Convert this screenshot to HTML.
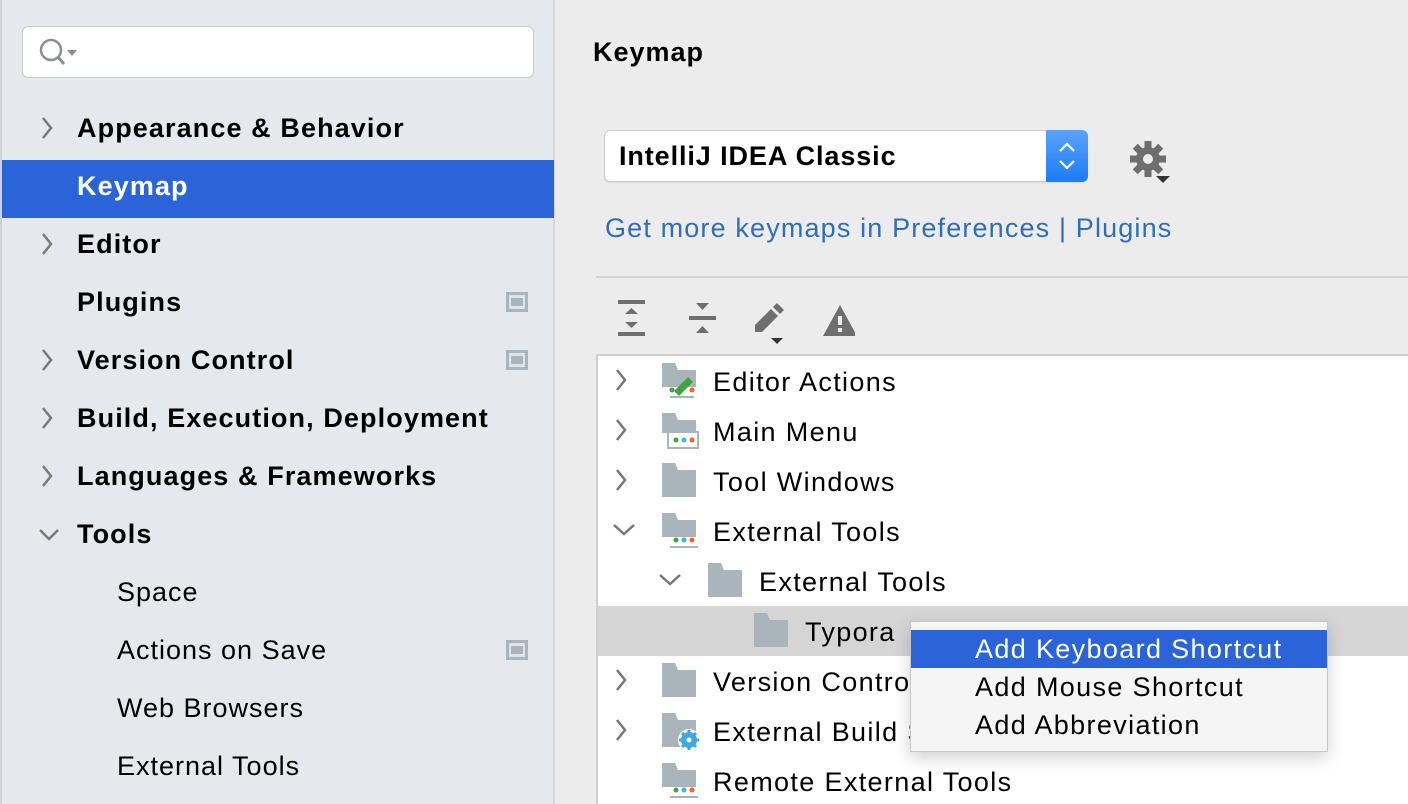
<!DOCTYPE html>
<html><head><meta charset="utf-8"><style>
*{margin:0;padding:0;box-sizing:border-box}
body{width:1408px;height:804px;overflow:hidden;background:#ececec;font-family:"Liberation Sans",Arial,sans-serif;position:relative;color:#000}
.a{position:absolute}
.side{left:0;top:0;width:555px;height:804px;background:#e5e9ee;border-right:2px solid #d3d5d8}
.st{position:absolute;font-size:27px;line-height:30px;white-space:nowrap;letter-spacing:1px}
.b{font-weight:bold;letter-spacing:1.1px}
.tt{position:absolute;font-size:27px;line-height:30px;white-space:nowrap;letter-spacing:1.35px}
</style></head><body>
<div class="a side"></div>
<div class="a" style="left:0;top:0;width:2px;height:804px;background:#cfd2d6"></div>
<div class="a" style="left:22px;top:26px;width:512px;height:52px;background:#fff;border:1px solid #c6c9cd;border-radius:6px"></div>
<svg class="a" style="left:34px;top:36px" width="48" height="34"><circle cx="17" cy="14" r="10" fill="none" stroke="#8a9096" stroke-width="2.5"/><line x1="24" y1="21" x2="30" y2="28" stroke="#8a9096" stroke-width="3"/><path d="M33 14h10l-5 6z" fill="#8a9096"/></svg>

<div class="a" style="left:2px;top:160px;width:552px;height:58px;background:#2b63d9"></div>

<svg class="a" style="left:38px;top:0" width="24" height="804" fill="none" stroke="#7a7a7a" stroke-width="2.5">
<path d="M5 118l8 10-8 10M5 234l8 10-8 10M5 350l8 10-8 10M5 408l8 10-8 10M5 466l8 10-8 10M2 530l9 9 9-9"/></svg>

<div class="st b" style="left:77px;top:113px">Appearance &amp; Behavior</div>
<div class="st b" style="left:77px;top:171px;color:#fff">Keymap</div>
<div class="st b" style="left:77px;top:229px">Editor</div>
<div class="st b" style="left:77px;top:287px">Plugins</div>
<div class="st b" style="left:77px;top:345px">Version Control</div>
<div class="st b" style="left:77px;top:403px">Build, Execution, Deployment</div>
<div class="st b" style="left:77px;top:461px">Languages &amp; Frameworks</div>
<div class="st b" style="left:77px;top:519px">Tools</div>
<div class="st" style="left:117px;top:577px">Space</div>
<div class="st" style="left:117px;top:635px">Actions on Save</div>
<div class="st" style="left:117px;top:693px">Web Browsers</div>
<div class="st" style="left:117px;top:751px">External Tools</div>
<svg class="a" style="left:506px;top:292px" width="22" height="370">
<g id="mi"><rect x="0" y="0" width="22" height="20" fill="#a9b4bd"/><rect x="3" y="3" width="16" height="14" fill="#dfe4e8"/><rect x="5" y="6" width="12" height="8" fill="#a9b4bd"/></g>
<use href="#mi" y="58"/><use href="#mi" y="348"/></svg>

<div class="st b" style="left:593px;top:37px;font-size:27px;letter-spacing:1px">Keymap</div>

<div class="a" style="left:604px;top:130px;width:484px;height:52px;background:#fff;border:1px solid #cbcbcb;border-radius:6px;box-shadow:0 1px 1px rgba(0,0,0,.08)"></div>
<div class="a" style="left:1046px;top:130px;width:42px;height:52px;background:linear-gradient(#5aa4fb,#1b7cf6);border-radius:0 6px 6px 0"></div>
<svg class="a" style="left:1054px;top:138px" width="26" height="36" fill="none" stroke="#fff" stroke-width="2.2"><path d="M6 13l7-7 7 7M6 23l7 7 7-7"/></svg>
<div class="st b" style="left:619px;top:141px;letter-spacing:0.9px">IntelliJ IDEA Classic</div>
<svg class="a" style="left:1128px;top:140px" width="44" height="44"><g transform="translate(20,19)" fill="#6e6e6e"><circle r="12"/><g><rect x="-3.5" y="-18" width="7" height="36"/><rect x="-3.5" y="-18" width="7" height="36" transform="rotate(45)"/><rect x="-3.5" y="-18" width="7" height="36" transform="rotate(90)"/><rect x="-3.5" y="-18" width="7" height="36" transform="rotate(135)"/></g><circle r="5" fill="#ececec"/></g><path d="M28 36h14l-7 7z" fill="#333"/></svg>

<div class="st" style="left:605px;top:213px;color:#2c6fb8;letter-spacing:1.15px">Get more keymaps in Preferences | Plugins</div>
<div class="a" style="left:596px;top:276px;width:812px;height:2px;background:#d3d3d3"></div>

<svg class="a" style="left:615px;top:296px" width="240" height="52" fill="#6e6e6e">
<rect x="3" y="4" width="27" height="4"/><rect x="3" y="36" width="27" height="4"/><path d="M10 18l6.5-6 6.5 6zM10 26l6.5 6 6.5-6z"/>
<rect x="74" y="20" width="27" height="4"/><path d="M81 7h13l-6.5 7zM81 37h13l-6.5-7z"/>
<path d="M140 36v-7l16-16 7 7-16 16z"/><path d="M158 11l4-4 7 7-4 4z"/><path d="M156 42h12l-6 6z" fill="#333"/>
<path d="M225 9l17 31h-34z"/><rect x="223" y="20" width="4" height="9" fill="#ececec"/><rect x="223" y="32" width="4" height="4" fill="#ececec"/>
</svg>

<div class="a" style="left:596px;top:354px;width:812px;height:450px;background:#fff;border:2px solid #cfcfcf;border-right:none;border-bottom:none"></div>
<div class="a" style="left:598px;top:606px;width:810px;height:50px;background:#d5d5d5"></div>

<svg class="a" style="left:600px;top:355px" width="120" height="449" fill="none" stroke="#777" stroke-width="2.5">
<path d="M17 15l8 10-8 10M17 65l8 10-8 10M17 115l8 10-8 10M14 170l10 9 10-9M60 220l10 9 10-9M17 315l8 10-8 10M17 365l8 10-8 10"/></svg>

<svg class="a" style="left:660px;top:355px" width="200" height="449">
<defs><path id="f" d="M2 8h13l3 7h18v27h-34z" fill="#a9b4bb"/></defs>
<g><use href="#f"/><rect x="0" y="32" width="38" height="12" fill="#fff"/><rect x="10" y="41" width="24" height="2" fill="#a9b4bb"/><path d="M14 36l14-14 5 5-14 14z" fill="#43a343"/><circle cx="12" cy="35" r="2.5" fill="#43a343"/><circle cx="32" cy="35" r="2.5" fill="#f26522"/></g>
<g transform="translate(0,50)"><use href="#f"/><rect x="0" y="28" width="38" height="16" fill="#fff"/><rect x="8" y="27" width="30" height="16" fill="none" stroke="#a9b4bb" stroke-width="2"/><circle cx="16" cy="35" r="2.5" fill="#43a343"/><circle cx="24" cy="35" r="2.5" fill="#40b6e0"/><circle cx="32" cy="35" r="2.5" fill="#f26522"/></g>
<g transform="translate(0,100)"><use href="#f"/></g>
<g transform="translate(0,150)"><use href="#f"/><rect x="0" y="32" width="38" height="12" fill="#fff"/><rect x="10" y="41" width="28" height="2" fill="#a9b4bb"/><circle cx="16" cy="35" r="2.5" fill="#43a343"/><circle cx="24" cy="35" r="2.5" fill="#40b6e0"/><circle cx="32" cy="35" r="2.5" fill="#f26522"/></g>
<g transform="translate(46,200)"><use href="#f"/></g>
<g transform="translate(92,250)"><use href="#f"/></g>
<g transform="translate(0,300)"><use href="#f"/></g>
<g transform="translate(0,350)"><use href="#f"/><circle cx="29" cy="35" r="11" fill="#fff"/><circle cx="29" cy="35" r="6" fill="none" stroke="#40a8e0" stroke-width="4"/><g stroke="#40a8e0" stroke-width="3"><path d="M29 25v20M19 35h20M22 28l14 14M36 28l-14 14"/></g><circle cx="29" cy="35" r="2.5" fill="#fff"/></g>
<g transform="translate(0,400)"><use href="#f"/><rect x="0" y="32" width="38" height="12" fill="#fff"/><rect x="10" y="41" width="28" height="2" fill="#a9b4bb"/><circle cx="16" cy="35" r="2.5" fill="#43a343"/><circle cx="24" cy="35" r="2.5" fill="#40b6e0"/><circle cx="32" cy="35" r="2.5" fill="#f26522"/></g>
</svg>

<div class="tt" style="left:713px;top:367px">Editor Actions</div>
<div class="tt" style="left:713px;top:417px">Main Menu</div>
<div class="tt" style="left:713px;top:467px">Tool Windows</div>
<div class="tt" style="left:713px;top:517px">External Tools</div>
<div class="tt" style="left:759px;top:567px">External Tools</div>
<div class="tt" style="left:805px;top:617px">Typora</div>
<div class="tt" style="left:713px;top:667px">Version Control</div>
<div class="tt" style="left:713px;top:717px">External Build Systems</div>
<div class="tt" style="left:713px;top:767px">Remote External Tools</div>

<div class="a" style="left:910px;top:621px;width:418px;height:131px;background:#f5f5f5;border:1px solid #c8c8c8;box-shadow:0 6px 16px rgba(0,0,0,.18)"></div>
<div class="a" style="left:911px;top:630px;width:416px;height:38px;background:#2b63d9"></div>
<div class="tt" style="left:975px;top:634px;color:#fff">Add Keyboard Shortcut</div>
<div class="tt" style="left:975px;top:672px">Add Mouse Shortcut</div>
<div class="tt" style="left:975px;top:710px">Add Abbreviation</div>
</body></html>
